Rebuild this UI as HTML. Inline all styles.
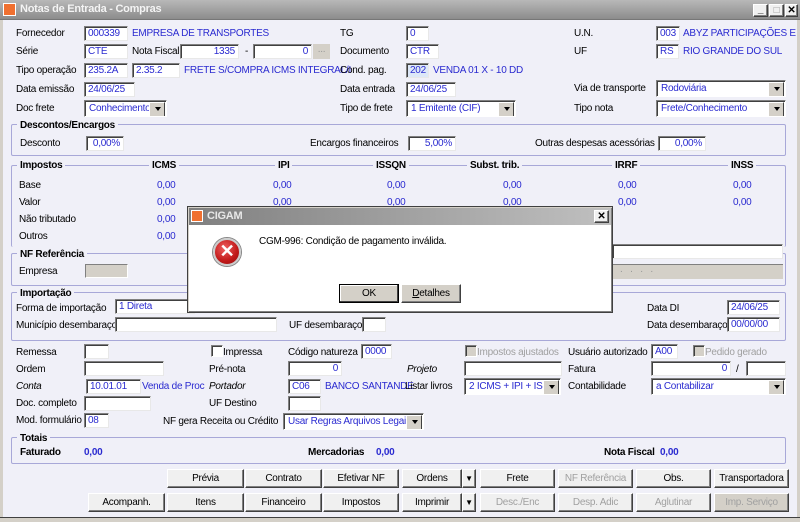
<!DOCTYPE html>
<html><head><meta charset="utf-8"><style>
*{box-sizing:border-box;margin:0;padding:0}
body{width:800px;height:522px;overflow:hidden;background:#f0f0f8;font-family:"Liberation Sans",sans-serif;font-size:10px;letter-spacing:-0.25px;color:#000;position:relative}
.a{position:absolute;white-space:nowrap}
.l{position:absolute;white-space:nowrap;line-height:13px}
.b{color:#2a2ad0}
.i{position:absolute;height:15px;background:#fff;border:1px solid;border-color:#808080 #e8e8e8 #e8e8e8 #808080;box-shadow:inset 1px 1px 0 #404040;color:#2a2ad0;padding:1px 3px;line-height:12px;white-space:nowrap;overflow:hidden}
.r{text-align:right}
.s{position:absolute;height:17px;background:#fff;border:1px solid;border-color:#808080 #fff #fff #808080;box-shadow:inset 1px 1px 0 #404040;color:#2a2ad0;padding:2px 4px;line-height:12px;white-space:nowrap;overflow:hidden}
.s::after{content:"";position:absolute;right:1px;top:1px;width:14px;height:13px;background:#d4d0c8;border:1px solid;border-color:#fff #404040 #404040 #fff}
.s::before{content:"";position:absolute;right:5px;top:6px;border:3px solid transparent;border-top:4px solid #000;z-index:2}
.g{position:absolute;border:1px solid #a8a8d8;border-radius:2px}
.gt{position:absolute;background:#f0f0f8;font-weight:bold;padding:0 3px;line-height:13px}
.h{font-weight:bold}
.btn{position:absolute;height:19px;background:#f0f0f0;border:1px solid;border-color:#fff #404040 #404040 #fff;box-shadow:inset -1px -1px 0 #808080;text-align:center;line-height:17px;white-space:nowrap}
.dis{color:#a0a0a0}
.cb{position:absolute;width:12px;height:12px;background:#fff;border:1px solid;border-color:#808080 #fff #fff #808080;box-shadow:inset 1px 1px 0 #404040}
</style></head><body>
<div class="a" style="left:0;top:0;width:800px;height:20px;background:linear-gradient(#b8b8b8,#8c8c8c);border-bottom:1px solid #777"></div>
<div class="a" style="left:3px;top:3px;width:13px;height:13px;background:#f07030;border:1px solid #fff"></div>
<div class="a" style="left:20px;top:3px;color:#f4f4f4;font-weight:bold;font-size:11px">Notas de Entrada - Compras</div>
<div class="btn" style="left:753px;top:4px;width:15px;height:13px;line-height:9px;font-weight:bold">_</div>
<div class="btn" style="left:769px;top:4px;width:15px;height:13px;color:#999;line-height:11px">□</div>
<div class="btn" style="left:785px;top:4px;width:13px;height:13px;line-height:11px;font-weight:bold">✕</div>
<div class="a" style="left:0;top:20px;width:3px;height:502px;background:#d4d0c8"></div>
<div class="a" style="left:797px;top:20px;width:3px;height:502px;background:#d4d0c8"></div>
<div class="a" style="left:0;top:517px;width:800px;height:5px;background:#d4d0c8;border-top:1px solid #404040"></div>

<div class="l" style="left:16px;top:27px">Fornecedor</div><div class="i" style="left:84px;top:26px;width:44px">000339</div><div class="l b" style="left:132px;top:27px">EMPRESA DE TRANSPORTES</div>
<div class="l" style="left:340px;top:27px">TG</div><div class="i" style="left:406px;top:26px;width:23px">0</div>
<div class="l" style="left:574px;top:27px">U.N.</div><div class="i" style="left:656px;top:26px;width:24px">003</div><div class="l b" style="left:683px;top:27px">ABYZ PARTICIPAÇÕES E</div>

<div class="l" style="left:16px;top:45px">Série</div><div class="i" style="left:84px;top:44px;width:44px">CTE</div>
<div class="l" style="left:132px;top:45px">Nota Fiscal</div><div class="i r" style="left:180px;top:44px;width:59px">1335</div><div class="l" style="left:245px;top:45px">-</div><div class="i r" style="left:253px;top:44px;width:59px">0</div>
<div class="a" style="left:313px;top:44px;width:17px;height:15px;background:#d4d0c8;color:#999;text-align:center;line-height:11px">...</div>
<div class="l" style="left:340px;top:45px">Documento</div><div class="i" style="left:406px;top:44px;width:33px">CTR</div>
<div class="l" style="left:574px;top:45px">UF</div><div class="i" style="left:656px;top:44px;width:23px">RS</div><div class="l b" style="left:683px;top:45px">RIO GRANDE DO SUL</div>

<div class="l" style="left:16px;top:64px">Tipo operação</div><div class="i" style="left:84px;top:63px;width:44px">235.2A</div><div class="i" style="left:132px;top:63px;width:48px">2.35.2</div><div class="l b" style="left:184px;top:64px">FRETE S/COMPRA ICMS INTEGRAL/I</div>
<div class="l" style="left:340px;top:64px">Cond. pag.</div><div class="i" style="left:406px;top:63px;width:23px;background:#dde8f8">202</div><div class="l b" style="left:433px;top:64px">VENDA 01 X - 10 DD</div>

<div class="l" style="left:16px;top:83px">Data emissão</div><div class="i" style="left:84px;top:82px;width:51px">24/06/25</div>
<div class="l" style="left:340px;top:83px">Data entrada</div><div class="i" style="left:406px;top:82px;width:50px">24/06/25</div>
<div class="l" style="left:574px;top:82px">Via de transporte</div><div class="s" style="left:656px;top:80px;width:130px">Rodoviária</div>

<div class="l" style="left:16px;top:102px">Doc frete</div><div class="s" style="left:84px;top:100px;width:83px">Conhecimento</div>
<div class="l" style="left:340px;top:102px">Tipo de frete</div><div class="s" style="left:406px;top:100px;width:110px">1 Emitente (CIF)</div>
<div class="l" style="left:574px;top:102px">Tipo nota</div><div class="s" style="left:656px;top:100px;width:130px">Frete/Conhecimento</div>

<div class="g" style="left:11px;top:124px;width:775px;height:32px"></div>
<div class="gt" style="left:17px;top:119px">Descontos/Encargos</div>
<div class="l" style="left:20px;top:137px">Desconto</div><div class="i r" style="left:86px;top:136px;width:38px">0,00%</div>
<div class="l" style="left:310px;top:137px">Encargos financeiros</div><div class="i r" style="left:408px;top:136px;width:48px">5,00%</div>
<div class="l" style="left:535px;top:137px">Outras despesas acessórias</div><div class="i r" style="left:658px;top:136px;width:48px">0,00%</div>

<div class="g" style="left:11px;top:165px;width:775px;height:82px;border-bottom:none"></div>
<div class="gt" style="left:17px;top:159px">Impostos</div>
<div class="gt" style="left:149px;top:159px">ICMS</div><div class="gt" style="left:275px;top:159px">IPI</div><div class="gt" style="left:373px;top:159px">ISSQN</div><div class="gt" style="left:467px;top:159px">Subst. trib.</div><div class="gt" style="left:612px;top:159px">IRRF</div><div class="gt" style="left:728px;top:159px">INSS</div>
<div class="l" style="left:19px;top:179px">Base</div><div class="l" style="left:19px;top:196px">Valor</div><div class="l" style="left:19px;top:213px">Não tributado</div><div class="l" style="left:19px;top:230px">Outros</div>
<div class="l b" style="left:157px;top:179px">0,00</div><div class="l b" style="left:273px;top:179px">0,00</div><div class="l b" style="left:387px;top:179px">0,00</div><div class="l b" style="left:503px;top:179px">0,00</div><div class="l b" style="left:618px;top:179px">0,00</div><div class="l b" style="left:733px;top:179px">0,00</div>
<div class="l b" style="left:157px;top:196px">0,00</div><div class="l b" style="left:273px;top:196px">0,00</div><div class="l b" style="left:387px;top:196px">0,00</div><div class="l b" style="left:503px;top:196px">0,00</div><div class="l b" style="left:618px;top:196px">0,00</div><div class="l b" style="left:733px;top:196px">0,00</div>
<div class="l b" style="left:157px;top:213px">0,00</div><div class="l b" style="left:157px;top:230px">0,00</div>

<div class="g" style="left:11px;top:253px;width:775px;height:33px"></div>
<div class="gt" style="left:17px;top:248px">NF Referência</div>
<div class="l" style="left:19px;top:265px">Empresa</div>
<div class="a" style="left:85px;top:264px;width:43px;height:14px;background:#d4d0c8;border:1px solid;border-color:#808080 #fff #fff #808080"></div>
<div class="i" style="left:612px;top:244px;width:171px"></div>
<div class="a" style="left:612px;top:264px;width:171px;height:15px;background:#d4d0c8;border-top:1px solid #808080;color:#999;padding-left:8px;line-height:10px">. &nbsp; . &nbsp; . &nbsp; .</div>

<div class="g" style="left:11px;top:292px;width:775px;height:49px"></div>
<div class="gt" style="left:17px;top:287px">Importação</div>
<div class="l" style="left:16px;top:302px">Forma de importação</div><div class="i" style="left:115px;top:299px;width:80px">1 Direta</div>
<div class="l" style="left:16px;top:319px">Município desembaraço</div><div class="i" style="left:115px;top:317px;width:162px"></div>
<div class="l" style="left:289px;top:319px">UF desembaraço</div><div class="i" style="left:362px;top:317px;width:24px"></div>
<div class="l" style="left:647px;top:302px">Data DI</div><div class="i" style="left:727px;top:300px;width:53px">24/06/25</div>
<div class="l" style="left:647px;top:319px">Data desembaraço</div><div class="i" style="left:727px;top:317px;width:53px">00/00/00</div>

<div class="l" style="left:16px;top:346px">Remessa</div><div class="i" style="left:84px;top:344px;width:25px"></div>
<div class="cb" style="left:211px;top:345px"></div><div class="l" style="left:223px;top:346px">Impressa</div>
<div class="l" style="left:288px;top:346px">Código natureza</div><div class="i" style="left:361px;top:344px;width:31px">0000</div>
<div class="cb" style="left:465px;top:345px;background:#d4d0c8"></div><div class="l dis" style="left:477px;top:346px">Impostos ajustados</div>
<div class="l" style="left:568px;top:346px">Usuário autorizado</div><div class="i" style="left:651px;top:344px;width:27px">A00</div>
<div class="cb" style="left:693px;top:345px;background:#d4d0c8"></div><div class="l dis" style="left:705px;top:346px">Pedido gerado</div>

<div class="l" style="left:16px;top:363px">Ordem</div><div class="i" style="left:84px;top:361px;width:80px"></div>
<div class="l" style="left:209px;top:363px">Pré-nota</div><div class="i r" style="left:288px;top:361px;width:54px">0</div>
<div class="l" style="left:407px;top:363px;font-style:italic">Projeto</div><div class="i" style="left:464px;top:361px;width:98px"></div>
<div class="l" style="left:568px;top:363px">Fatura</div><div class="i r" style="left:651px;top:361px;width:80px">0</div><div class="l" style="left:736px;top:363px">/</div><div class="i" style="left:746px;top:361px;width:40px"></div>

<div class="l" style="left:16px;top:380px;font-style:italic">Conta</div><div class="i" style="left:86px;top:379px;width:55px">10.01.01</div><div class="l b" style="left:142px;top:380px">Venda de Proc</div>
<div class="l" style="left:209px;top:380px;font-style:italic">Portador</div><div class="i" style="left:288px;top:379px;width:33px">C06</div><div class="l b" style="left:325px;top:380px">BANCO SANTANDE</div>
<div class="l" style="left:405px;top:380px">Listar livros</div><div class="s" style="left:464px;top:378px;width:97px">2 ICMS + IPI + ISS</div>
<div class="l" style="left:568px;top:380px">Contabilidade</div><div class="s" style="left:651px;top:378px;width:135px">a Contabilizar</div>

<div class="l" style="left:16px;top:397px">Doc. completo</div><div class="i" style="left:84px;top:396px;width:67px"></div>
<div class="l" style="left:209px;top:397px">UF Destino</div><div class="i" style="left:288px;top:396px;width:33px"></div>

<div class="l" style="left:16px;top:414px">Mod. formulário</div><div class="i" style="left:84px;top:413px;width:25px">08</div>
<div class="l" style="left:163px;top:415px">NF gera Receita ou Crédito</div><div class="s" style="left:283px;top:413px;width:141px">Usar Regras Arquivos Legais</div>

<div class="g" style="left:11px;top:437px;width:775px;height:27px"></div>
<div class="gt" style="left:17px;top:432px">Totais</div>
<div class="l h" style="left:20px;top:446px">Faturado</div><div class="l h b" style="left:84px;top:446px">0,00</div>
<div class="l h" style="left:308px;top:446px">Mercadorias</div><div class="l h b" style="left:376px;top:446px">0,00</div>
<div class="l h" style="left:604px;top:446px">Nota Fiscal</div><div class="l h b" style="left:660px;top:446px">0,00</div>

<div class="btn" style="left:167px;top:469px;width:77px">Prévia</div>
<div class="btn" style="left:245px;top:469px;width:77px">Contrato</div>
<div class="btn" style="left:323px;top:469px;width:76px">Efetivar NF</div>
<div class="btn" style="left:402px;top:469px;width:60px">Ordens</div><div class="btn" style="left:462px;top:469px;width:14px;font-size:8px">▼</div>
<div class="btn" style="left:480px;top:469px;width:75px">Frete</div>
<div class="btn dis" style="left:558px;top:469px;width:75px">NF Referência</div>
<div class="btn" style="left:636px;top:469px;width:75px">Obs.</div>
<div class="btn" style="left:714px;top:469px;width:75px">Transportadora</div>
<div class="btn" style="left:88px;top:493px;width:77px">Acompanh.</div>
<div class="btn" style="left:167px;top:493px;width:77px">Itens</div>
<div class="btn" style="left:245px;top:493px;width:77px">Financeiro</div>
<div class="btn" style="left:323px;top:493px;width:76px">Impostos</div>
<div class="btn" style="left:402px;top:493px;width:60px">Imprimir</div><div class="btn" style="left:462px;top:493px;width:14px;font-size:8px">▼</div>
<div class="btn dis" style="left:480px;top:493px;width:75px">Desc./Enc</div>
<div class="btn dis" style="left:558px;top:493px;width:75px">Desp. Adic</div>
<div class="btn dis" style="left:636px;top:493px;width:75px">Aglutinar</div>
<div class="btn dis" style="left:714px;top:493px;width:75px;background:#d4d0c8">Imp. Serviço</div>

<div class="a" style="left:187px;top:206px;width:426px;height:107px;background:#fff;border:1px solid #404040;box-shadow:inset 1px 1px 0 #d4d0c8,inset -1px -1px 0 #808080"></div>
<div class="a" style="left:189px;top:208px;width:422px;height:17px;background:linear-gradient(90deg,#808080,#c0c0c0)"></div>
<div class="a" style="left:191px;top:210px;width:12px;height:12px;background:#f07030;border:1px solid #fff"></div>
<div class="a" style="left:207px;top:210px;color:#e8e8e8;font-weight:bold;font-size:11px">CIGAM</div>
<div class="btn" style="left:594px;top:210px;width:15px;height:13px;line-height:11px;font-weight:bold">✕</div>
<div class="a" style="left:213px;top:238px;width:28px;height:28px;border-radius:50%;background:radial-gradient(circle at 40% 35%,#f06060,#c01818 60%,#901010);border:2px solid #ccc;box-shadow:0 0 0 1px #888"></div>
<div class="a" style="left:213px;top:237px;width:28px;height:28px;color:#fff;font-weight:bold;font-size:18px;text-align:center;line-height:28px">✕</div>
<div class="a" style="left:259px;top:236px">CGM-996: Condição de pagamento inválida.</div>
<div class="btn" style="left:339px;top:284px;width:60px;border:1px solid #000;box-shadow:inset -1px -1px 0 #404040,inset 1px 1px 0 #fff;background:#d4d0c8">OK</div>
<div class="btn" style="left:401px;top:284px;width:60px;background:#d4d0c8"><u>D</u>etalhes</div>
</body></html>
